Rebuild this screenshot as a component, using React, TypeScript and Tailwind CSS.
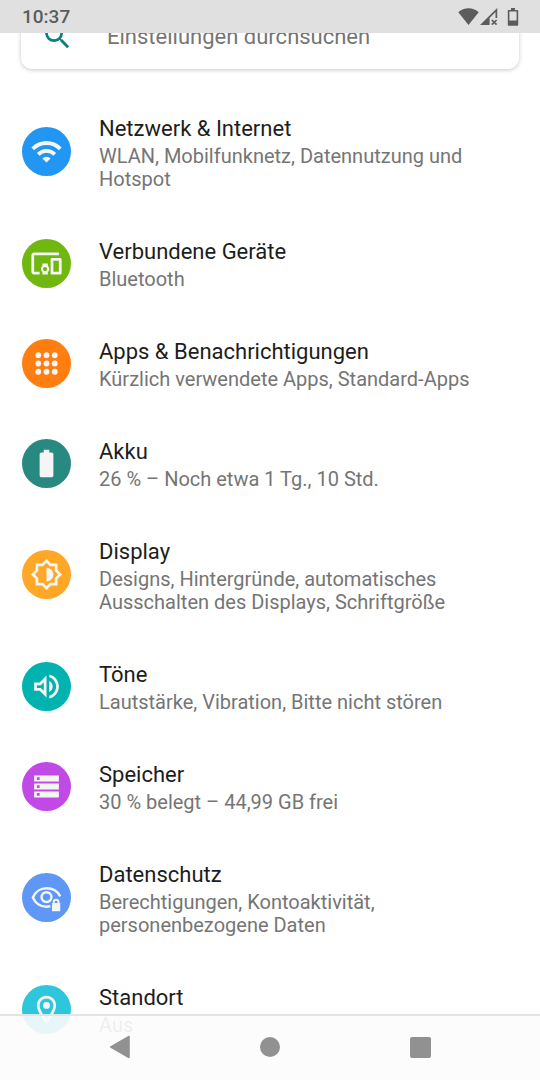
import React from 'react';
import {
  MdBatteryFull,
  MdDevicesOther,
  MdOutlineLocationOn,
  MdOutlineVolumeUp,
  MdSearch,
  MdWifi,
} from 'react-icons/md';

interface SettingsItem {
  id: string;
  title: string;
  summary: string;
  color: string;
  icon: React.ReactNode;
}

const iconClass = 'h-[33px] w-[33px]';

function AppsIcon() {
  const stops = [6, 12, 18];
  return (
    <svg viewBox="0 0 24 24" fill="currentColor" className={iconClass}>
      {stops.map(y => stops.map(x => <circle key={`${x}-${y}`} cx={x} cy={y} r="2.1" />))}
    </svg>
  );
}

function BrightnessIcon() {
  return (
    <svg viewBox="0 0 24 24" fill="currentColor" className={iconClass}>
      <path
        fillRule="evenodd"
        d="M20 8.69V4h-4.69L12 .69 8.69 4H4v4.69L.69 12 4 15.31V20h4.69L12 23.31 15.31 20H20v-4.69L23.31 12 20 8.69zm-2 5.79V18h-3.52L12 20.48 9.52 18H6v-3.52L3.52 12 6 9.52V6h3.52L12 3.52 14.48 6H18v3.52L20.48 12 18 14.48z"
      />
      <path d="M12 7v10c2.76 0 5-2.24 5-5s-2.24-5-5-5z" />
    </svg>
  );
}

function StorageIcon() {
  return (
    <svg viewBox="0 0 24 24" fill="currentColor" className={iconClass}>
      <path
        fillRule="evenodd"
        d="M3 4h18v4.3H3zM5 5.2v2h2v-2zM3 9.85h18v4.3H3zM5 11v2h2v-2zM3 15.7h18V20H3zM5 16.8v2h2v-2z"
      />
    </svg>
  );
}

function PrivacyIcon() {
  return (
    <svg viewBox="0 0 24 24" fill="none" className={iconClass}>
      <path
        d="M22 11.2C20.2 7.7 16.4 5.3 12 5.3S3.7 7.9 2.1 12c1.6 4.1 5.5 6.700 9.900 6.700 1 0 1.900-.1 2.800-.4"
        stroke="currentColor"
        strokeWidth="1.800"
      />
      <circle cx="12" cy="11.7" r="3.6" stroke="currentColor" strokeWidth="1.8" />
      <path
        d="M16 16h.6v-.7a2.4 2.4 0 0 1 4.8 0v.7h.6v6h-6zM18 16h2v-.7a1 1 0 0 0-2 0z"
        fill="currentColor"
        fillRule="evenodd"
      />
    </svg>
  );
}

const items: SettingsItem[] = [
  {
    id: 'network',
    title: 'Netzwerk & Internet',
    summary: 'WLAN, Mobilfunknetz, Datennutzung und Hotspot',
    color: 'bg-[#2196f3]',
    icon: <MdWifi className={iconClass} />,
  },
  {
    id: 'devices',
    title: 'Verbundene Geräte',
    summary: 'Bluetooth',
    color: 'bg-[#70b70f]',
    icon: <MdDevicesOther className={iconClass} />,
  },
  {
    id: 'apps',
    title: 'Apps & Benachrichtigungen',
    summary: 'Kürzlich verwendete Apps, Standard-Apps',
    color: 'bg-[#ff7e0f]',
    icon: <AppsIcon />,
  },
  {
    id: 'battery',
    title: 'Akku',
    summary: '26 % – Noch etwa 1 Tg., 10 Std.',
    color: 'bg-[#27897f]',
    icon: <MdBatteryFull className={iconClass} />,
  },
  {
    id: 'display',
    title: 'Display',
    summary: 'Designs, Hintergründe, automatisches Ausschalten des Displays, Schriftgröße',
    color: 'bg-[#ffa726]',
    icon: <BrightnessIcon />,
  },
  {
    id: 'sound',
    title: 'Töne',
    summary: 'Lautstärke, Vibration, Bitte nicht stören',
    color: 'bg-[#00b2b0]',
    icon: <MdOutlineVolumeUp className={iconClass} />,
  },
  {
    id: 'storage',
    title: 'Speicher',
    summary: '30 % belegt – 44,99 GB frei',
    color: 'bg-[#c14ae6]',
    icon: <StorageIcon />,
  },
  {
    id: 'privacy',
    title: 'Datenschutz',
    summary: 'Berechtigungen, Kontoaktivität, personenbezogene Daten',
    color: 'bg-[#5e97f6]',
    icon: <PrivacyIcon />,
  },
  {
    id: 'location',
    title: 'Standort',
    summary: 'Aus',
    color: 'bg-[#2ec6db]',
    icon: <MdOutlineLocationOn className={iconClass} />,
  },
];

function StatusBar() {
  return (
    <header className="fixed inset-x-0 top-0 z-10 flex h-[33px] items-center justify-between bg-[#e0e0e0] pr-[21px] pl-[22px] text-[#5c5c5c]">
      <span className="text-[19px] leading-6 font-medium">10:37</span>
      <div className="flex items-center">
        <svg viewBox="0 0 21 17" fill="currentColor" className="h-[17px] w-[21px]">
          <path d="M10.5 17L.3 4.2C3.2 1.7 6.7.3 10.5.3s7.3 1.4 10.2 3.9z" />
        </svg>
        <svg viewBox="0 0 18 17" fill="currentColor" className="ml-px h-[17px] w-[18px]">
          <path fillRule="evenodd" d="M0 17L17.2 0v10h-1.7V4L9.6 10v7z" />
          <path d="M11.8 12l4.8 4.6M16.6 12l-4.8 4.6" stroke="currentColor" strokeWidth="1.7" />
        </svg>
        <svg viewBox="0 0 12 18" fill="currentColor" className="ml-[9px] h-[18px] w-[12px]">
          <path
            fillRule="evenodd"
            d="M4 0h4v2h2.2c.6 0 1 .4 1 1v13.8c0 .6-.4 1-1 1H1.800c-.6 0-1-.4-1-1V3c0-.6.4-1 1-1H4zM2.400 3.600v9h7.200v-9z"
          />
        </svg>
      </div>
    </header>
  );
}

function SearchBar() {
  return (
    <label className="mx-[21px] mt-1 flex h-[65px] items-center rounded-[11px] bg-white pl-5 shadow-[0_1px_4px_rgba(0,0,0,0.22)]">
      <MdSearch className="h-[33px] w-[33px] shrink-0 text-[#0b7f83]" />
      <input
        type="text"
        aria-label="Einstellungen durchsuchen"
        placeholder="Einstellungen durchsuchen"
        className="ml-[33px] min-w-0 flex-1 bg-transparent text-[22px] leading-7 outline-none placeholder:text-[#757575]"
      />
    </label>
  );
}

function SettingsRow({ title, summary, color, icon }: SettingsItem) {
  return (
    <li>
      <a href="#" className="flex items-center px-[22px] py-[22px]">
        <span
          className={`flex h-[49px] w-[49px] shrink-0 items-center justify-center rounded-full text-[#f5f5f5] ${color}`}
        >
          {icon}
        </span>
        <span className="ml-7 max-w-[385px] flex-1">
          <span className="block text-[22px] leading-[33px] text-[#1d1d1d]">{title}</span>
          <span className="block text-[20px] leading-[23px] text-[#757575]">{summary}</span>
        </span>
      </a>
    </li>
  );
}

function NavigationBar() {
  return (
    <nav className="fixed inset-x-0 bottom-0 z-10 flex h-[66px] border-t-2 border-[#e3e3e3] bg-[#fcfcfc]/90 px-[45px] pb-[2px] text-[#919191]">
      <button type="button" aria-label="Zurück" className="flex flex-1 items-center justify-center">
        <svg viewBox="0 0 22 24" fill="currentColor" className="h-6 w-[22px]">
          <path d="M1.5 11.2L19.2 1c.8-.4 1.6 0 1.6.9v20.2c0 .9-.8 1.3-1.6.9L1.5 12.8c-.7-.4-.7-1.2 0-1.6z" />
        </svg>
      </button>
      <button type="button" aria-label="Startseite" className="flex flex-1 items-center justify-center">
        <span className="h-5 w-5 rounded-full bg-current" />
      </button>
      <button type="button" aria-label="Übersicht" className="flex flex-1 items-center justify-center">
        <span className="h-[21px] w-[21px] rounded-[2px] bg-current" />
      </button>
    </nav>
  );
}

function App() {
  return (
    <div className="flow-root min-h-screen bg-white font-['Roboto',sans-serif]">
      <StatusBar />
      <main>
        <SearchBar />
        <ul className="mt-[21px]">
          {items.map(item => (
            <SettingsRow key={item.id} {...item} />
          ))}
        </ul>
      </main>
      <NavigationBar />
    </div>
  );
}

export default App;
